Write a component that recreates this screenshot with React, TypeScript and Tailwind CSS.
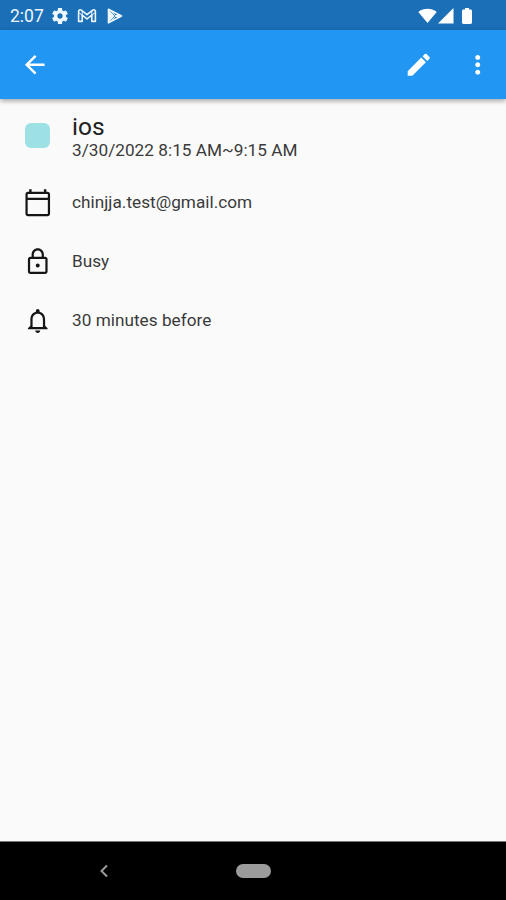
import type { ReactNode } from "react";

type IconProps = { d: string; className?: string };

function Icon({ d, className = "size-[29.5px]" }: IconProps) {
  return (
    <svg viewBox="0 0 24 24" fill="currentColor" className={`shrink-0 ${className}`} aria-hidden="true">
      <path d={d} />
    </svg>
  );
}

const paths = {
  back: "M20 11H7.83l5.59-5.59L12 4l-8 8 8 8 1.41-1.41L7.83 13H20v-2z",
  edit: "M3 17.25V21h3.75L17.81 9.94l-3.75-3.75L3 17.25zM20.71 7.04c.39-.39.39-1.02 0-1.41l-2.34-2.34c-.39-.39-1.02-.39-1.41 0l-1.83 1.83 3.75 3.75 1.83-1.83z",
  more: "M12 8c1.1 0 2-.9 2-2s-.9-2-2-2-2 .9-2 2 .9 2 2 2zm0 2c-1.1 0-2 .9-2 2s.9 2 2 2 2-.9 2-2-.9-2-2-2zm0 6c-1.1 0-2 .9-2 2s.9 2 2 2 2-.9 2-2-.9-2-2-2z",
  calendar: "M20 3h-1V1h-2v2H7V1H5v2H4c-1.1 0-2 .9-2 2v16c0 1.1.9 2 2 2h16c1.1 0 2-.9 2-2V5c0-1.1-.9-2-2-2zm.2 18.2H3.8V9.7h16.4v11.5zm0-13.2H3.8V4.8h16.4V8z",
  lock: "M12 16.6c.9 0 1.6-.7 1.6-1.6s-.7-1.6-1.6-1.6-1.6.7-1.6 1.6.7 1.6 1.6 1.6zm6-8.6h-1V6c0-2.76-2.24-5-5-5S7 3.24 7 6v2H6c-1.1 0-2 .9-2 2v10c0 1.1.9 2 2 2h12c1.1 0 2-.9 2-2V10c0-1.1-.9-2-2-2zM8.8 6c0-1.75 1.45-3.2 3.2-3.2s3.2 1.45 3.2 3.2v2H8.8V6zm9.4 14.2H5.8V9.8h12.4v10.4z",
  bell: "M12 22c1.1 0 2-.9 2-2h-4c0 1.1.9 2 2 2zm6-6v-5c0-3.07-1.63-5.64-4.5-6.32V4c0-.83-.67-1.5-1.5-1.5s-1.5.67-1.5 1.5v.68C7.64 5.36 6 7.92 6 11v5l-2 2v1h16v-1l-2-2zm-1.8 1H7.8v-6c0-2.6 1.6-4.7 4.2-4.7s4.2 2.1 4.2 4.7v6z",
  gear: "M19.14 12.94c.04-.3.06-.61.06-.94 0-.32-.02-.64-.07-.94l2.03-1.58c.18-.14.23-.41.12-.61l-1.92-3.32c-.12-.22-.37-.29-.59-.22l-2.39.96c-.5-.38-1.03-.7-1.62-.94l-.36-2.54c-.04-.24-.24-.41-.48-.41h-3.84c-.24 0-.43.17-.47.41l-.36 2.54c-.59.24-1.13.57-1.62.94l-2.39-.96c-.22-.08-.47 0-.59.22L2.74 8.87c-.12.21-.08.47.12.61l2.03 1.58c-.05.3-.09.63-.09.94s.02.64.07.94l-2.03 1.58c-.18.14-.23.41-.12.61l1.92 3.32c.12.22.37.29.59.22l2.39-.96c.5.38 1.03.7 1.62.94l.36 2.54c.05.24.24.41.48.41h3.84c.24 0 .44-.17.47-.41l.36-2.54c.59-.24 1.13-.56 1.62-.94l2.39.96c.22.08.47 0 .59-.22l1.92-3.32c.12-.22.07-.47-.12-.61l-2.01-1.58zM12 15.2c-1.77 0-3.2-1.43-3.2-3.2s1.43-3.2 3.2-3.2 3.2 1.43 3.2 3.2-1.43 3.2-3.2 3.2z",
};

function StatusBar() {
  return (
    <div className="flex h-[30px] shrink-0 items-center bg-[#1a6fb7] pl-2.5 pt-px text-[#eef6fd]">
      <span className="w-[40px] pt-0.5 text-[17.5px] leading-none">2:07</span>
      <Icon d={paths.gear} className="size-5" />
      <svg viewBox="0 0 20 16" className="ml-[7px] h-4 w-5 shrink-0" fill="none" stroke="currentColor" strokeLinejoin="round" aria-hidden="true">
        <path d="M1.6 13.4V3.4c0-1.5 1.6-2 2.7-1.2L10 6.6l5.7-4.4c1.1-.8 2.7-.3 2.7 1.2v10h-3.6V7.2L10 10.9 5.2 7.2v6.2z" strokeWidth="1.6" />
        <path d="M5.2 7.2V3M14.8 7.2V3M1.6 4.5l3.6 2.7M18.4 4.5l-3.6 2.7" strokeWidth="1" />
      </svg>
      <svg viewBox="0 0 16 16" className="ml-2.5 size-4 shrink-0" aria-hidden="true">
        <path d="M1.5 1.2 14.5 8l-13 6.8z" fill="none" stroke="currentColor" strokeWidth="1.6" strokeLinejoin="round" />
        <path d="M1.5 1.2 7.5 8l-6 6.8z" fill="currentColor" />
        <path d="m4 3 7 7M4 13l7-7" fill="none" stroke="currentColor" strokeWidth="1" />
        <path d="M14.5 8 11 6 9.3 8 11 10z" fill="currentColor" />
      </svg>
      <div className="ml-auto flex items-center pr-[33px] text-white">
        <svg viewBox="0 0 19 16" className="h-4 w-[19px]" fill="currentColor" aria-hidden="true">
          <path d="M9.5 15 .3 4C5.6-.4 13.4-.4 18.7 4z" />
        </svg>
        <svg viewBox="0 0 16 16" className="ml-px size-4" fill="currentColor" aria-hidden="true">
          <path d="M0 15.5 15.5 0v15.5z" />
        </svg>
        <svg viewBox="0 0 10 16" className="ml-2 mr-px h-4 w-2.5" fill="currentColor" aria-hidden="true">
          <path d="M3 0h4v1.6h1.6c.8 0 1.4.6 1.4 1.4v11.6c0 .8-.6 1.4-1.4 1.4H1.4C.6 16 0 15.4 0 14.6V3c0-.8.6-1.4 1.4-1.4H3z" />
        </svg>
      </div>
    </div>
  );
}

function Row({ icon, children }: { icon: string; children: ReactNode }) {
  return (
    <div className="flex h-[59px] items-center">
      <Icon d={icon} />
      <span className="ml-[20px] pt-px text-[17.2px] tracking-[0.02px]">{children}</span>
    </div>
  );
}

export default function App() {
  return (
    <div className="flex h-[900px] w-[506px] flex-col overflow-hidden bg-[#fafafa] font-[Roboto,sans-serif] text-[#3a3a3a]">
      <StatusBar />
      <header className="flex h-[69px] shrink-0 items-center bg-[#2196f3] pl-5 pr-3.5 text-white shadow-[0_2px_5px_rgba(0,0,0,0.35)]">
        <button aria-label="Back"><Icon d={paths.back} /></button>
        <button aria-label="Edit" className="ml-auto mr-[29.5px]"><Icon d={paths.edit} /></button>
        <button aria-label="More"><Icon d={paths.more} /></button>
      </header>
      <main className="flex-1 pl-[22.5px] pt-[14px]">
        <div className="flex h-[46px] items-center">
          <div className="mb-px ml-[2.5px] size-[25px] rounded-[6px] bg-[#9de1e5]" />
          <div className="ml-[22px]">
            <h1 className="text-[24.5px] leading-[27px] text-[#212121]">ios</h1>
            <p className="text-[17.2px] leading-5 tracking-[0.02px]">3/30/2022 8:15 AM~9:15 AM</p>
          </div>
        </div>
        <div className="pt-[14px] [&_svg]:text-[#151515]">
          <Row icon={paths.calendar}>chinjja.test@gmail.com</Row>
          <Row icon={paths.lock}>Busy</Row>
          <Row icon={paths.bell}>30 minutes before</Row>
        </div>
      </main>
      <nav className="flex h-[59px] shrink-0 items-center border-t border-[#777] bg-black pl-[97px]">
        <svg viewBox="0 0 14 16" className="h-4 w-3.5" fill="none" stroke="#9b9b9b" strokeWidth="2" aria-hidden="true">
          <path d="M10 2.5 4.5 8l5.5 5.5" />
        </svg>
        <div className="ml-[125px] h-3.5 w-[35px] rounded-full bg-[#9b9b9b]" />
      </nav>
    </div>
  );
}
